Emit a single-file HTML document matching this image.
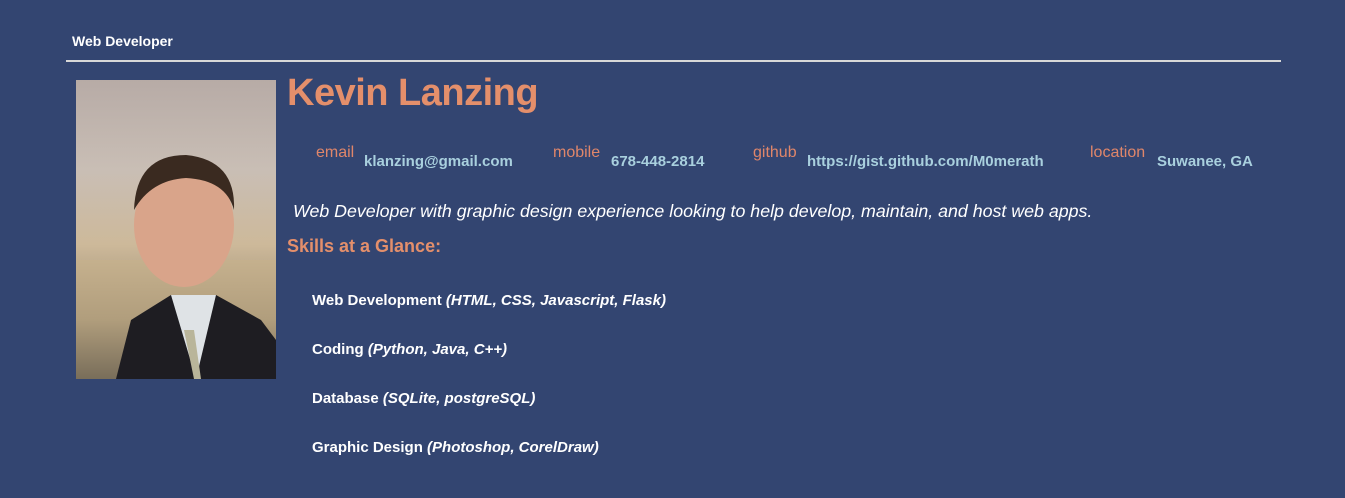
<!DOCTYPE html>
<html><head><style>
body{margin:0;background:#334571;width:1345px;height:498px;overflow:hidden;font-family:"Liberation Sans",sans-serif;position:relative}
.a{position:absolute;white-space:nowrap}
.hdr{left:72px;top:33px;font-size:14px;font-weight:bold;color:#fff}
.line{left:66px;top:60px;width:1215px;height:2px;background:#d8d8d8}
.photo{left:76px;top:80px;width:200px;height:299px;overflow:hidden;background:linear-gradient(180deg,#b7aba6 0%,#c9beb5 30%,#cdb99a 55%,#9a8a70 80%,#2a2a2a 100%)}
.name{left:287px;top:72px;font-size:38px;letter-spacing:-0.5px;font-weight:bold;color:#e48f6b}
.lab{font-size:16px;color:#e0866a;top:144px}
.val{font-size:15px;font-weight:bold;color:#a9d0de;top:153px}
.tag{left:293px;top:201px;font-size:17.8px;font-style:italic;color:#fff}
.sk{left:287px;top:236px;font-size:18px;font-weight:bold;color:#e48f6b}
.it{left:312px;font-size:15px;font-weight:bold;color:#fff}
.it i{font-style:italic}
</style></head><body>
<div class="a hdr">Web Developer</div>
<div class="a line"></div>
<div class="a photo">
<svg width="200" height="299" viewBox="0 0 200 299">
<rect x="0" y="180" width="200" height="119" fill="#c8b28a" opacity="0.5"/>
<path d="M40 299 L55 240 L95 215 L140 215 L185 240 L200 260 L200 299Z" fill="#1e1d22"/>
<path d="M95 215 L120 299 L140 215Z" fill="#dfe3e6"/>
<path d="M108 250 L118 299 L125 299 L118 250Z" fill="#b9b59a"/>
<ellipse cx="108" cy="145" rx="50" ry="62" fill="#d9a48a"/>
<path d="M58 130 Q60 75 110 75 Q160 80 158 130 Q150 100 110 98 Q75 100 58 130Z" fill="#3a2a20"/>
</svg>
</div>
<div class="a name">Kevin Lanzing</div>
<div class="a lab" style="left:316px">email</div>
<div class="a val" style="left:364px">klanzing@gmail.com</div>
<div class="a lab" style="left:553px">mobile</div>
<div class="a val" style="left:611px">678-448-2814</div>
<div class="a lab" style="left:753px">github</div>
<div class="a val" style="left:807px">https://gist.github.com/M0merath</div>
<div class="a lab" style="left:1090px">location</div>
<div class="a val" style="left:1157px">Suwanee, GA</div>
<div class="a tag">Web Developer with graphic design experience looking to help develop, maintain, and host web apps.</div>
<div class="a sk">Skills at a Glance:</div>
<div class="a it" style="top:292px">Web Development <i>(HTML, CSS, Javascript, Flask)</i></div>
<div class="a it" style="top:341px">Coding <i>(Python, Java, C++)</i></div>
<div class="a it" style="top:390px">Database <i>(SQLite, postgreSQL)</i></div>
<div class="a it" style="top:439px">Graphic Design <i>(Photoshop, CorelDraw)</i></div>
</body></html>
